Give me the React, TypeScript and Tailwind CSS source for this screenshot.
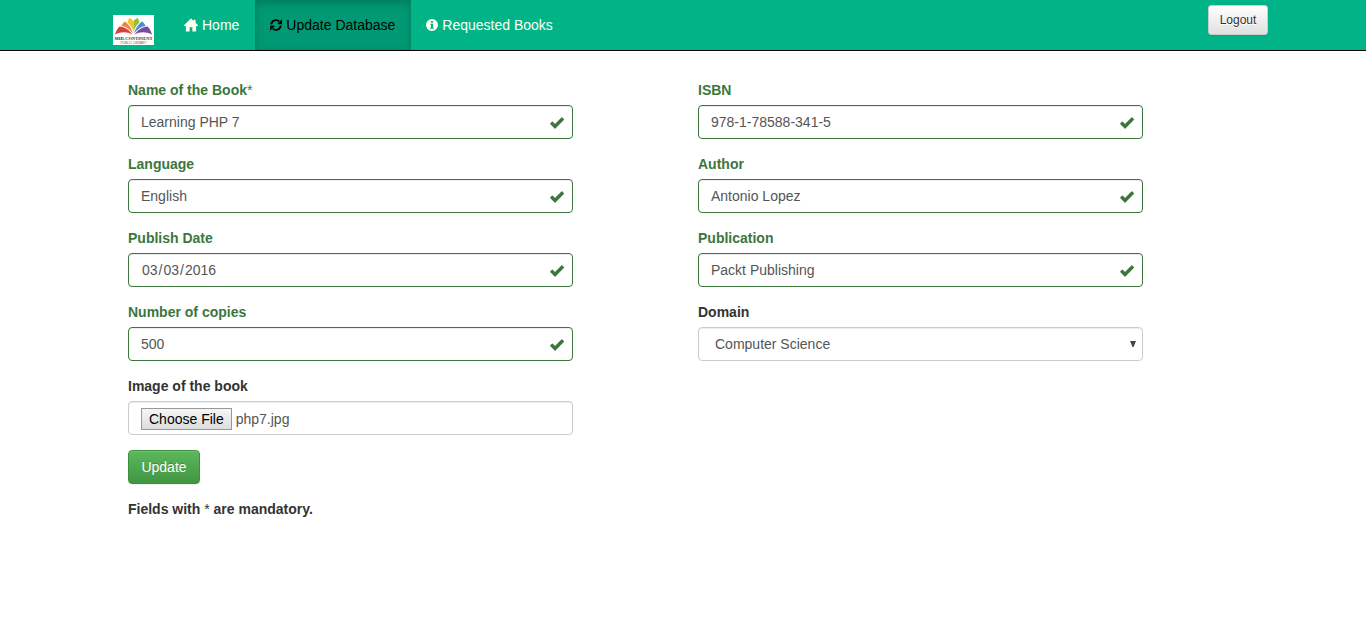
import { useEffect, useRef, type ReactNode } from "react";

const control =
  "block h-[34px] w-full rounded border bg-white text-sm leading-5 text-[#555] outline-none shadow-[inset_0_1px_1px_rgba(0,0,0,0.075)]";
const neutral = "border-[#ccc]";
const valid = "border-[#3c763d]";

function HomeIcon() {
  return (
    <svg viewBox="0 0 15 14" className="h-[14px] w-[14px] shrink-0" fill="#fffff0" aria-hidden="true">
      <path d="M7.1.2a.6.6 0 0 1 .8 0L10.400 2.600V1.400h2v3.200L15 7.200v.9h-2V14H9V9.500H6V14H2V8.100H0v-.9z" />
    </svg>
  );
}

function RefreshIcon() {
  return (
    <svg viewBox="0 0 12 12" className="h-3 w-3 shrink-0" aria-hidden="true">
      <path d="M1.200 5.300A4.900 4.900 0 0 1 9.300 2.400M10.800 6.700A4.900 4.900 0 0 1 2.700 9.600" fill="none" stroke="currentColor" strokeWidth="1.900" />
      <path d="M12 .2v5H7zM0 11.800v-5h5z" fill="currentColor" />
    </svg>
  );
}

function InfoIcon() {
  return (
    <svg viewBox="0 0 12 12" className="h-3 w-3 shrink-0" fill="#fffff0" aria-hidden="true">
      <path
        fillRule="evenodd"
        d="M6 0a6 6 0 1 1 0 12A6 6 0 0 1 6 0zM5 2v1.800h2V2zM4.200 4.800v1h.8v2.900h-.9v1h3.800v-1H7V4.800z"
      />
    </svg>
  );
}

function CheckIcon() {
  return (
    <svg viewBox="0 0 14 12" className="h-3 w-[14px]" fill="#3c763d" aria-hidden="true">
      <path d="M11.400.5a.6.6 0 0 1 .9 0l1.500 1.500a.6.6 0 0 1 0 .9l-8.300 8.500a.6.6 0 0 1-.9 0L.4 7.200a.6.6 0 0 1 0-.9l1.500-1.500a.6.6 0 0 1 .9 0L5 6.900z" />
    </svg>
  );
}

function Logo() {
  return (
    <svg viewBox="0 0 41 30" className="h-[30px] w-[41px]" role="img" aria-label="Mid-Continent Public Library">
      <rect width="41" height="30" fill="#fff" />
      <path d="M2 19.500C3 16 4.500 13.500 6.500 11.500c5 .5 10 3.500 13 8C14 16.500 8 16.500 2 19.500z" fill="#d8403c" />
      <path d="M8.500 11C9 9 10.500 7.500 12 6.500c4 3 7 7.500 8 12C17 14.500 13 11.500 8.500 11z" fill="#f2853f" />
      <path d="M14.500 7.500C15 5.500 15.500 4 16.500 3c2 .8 3.400 2 4 3.500V17C19.500 13 17.500 10 14.500 7.500z" fill="#f6c524" />
      <path d="M26.500 7.500C26 5.500 25.500 4 24.500 3c-2 .8-3.400 2-4 3.500V17c1-4 3-7 6-9.500z" fill="#8fbf45" />
      <path d="M32.500 11C32 9 30.500 7.500 29 6.500c-4 3-7 7.500-8 12 3-4 7-7 11.500-7.500z" fill="#4b8ed0" />
      <path d="M39 19.500c-1-3.500-2.500-6-4.500-8-5 .5-10 3.500-13 8 5.500-3 11.500-3 17.500 0z" fill="#7a489f" />
      <text x="20.500" y="24.500" textAnchor="middle" fontFamily="Liberation Serif, serif" fontSize="4.500" fontWeight="700" fill="#333">
        MID-CONTINENT
      </text>
      <text x="20.500" y="28.500" textAnchor="middle" fontFamily="Liberation Sans, sans-serif" fontSize="3.200" fill="#666">
        PUBLIC LIBRARY
      </text>
    </svg>
  );
}

function NavLink({ active = false, icon, children }: { active?: boolean; icon: ReactNode; children: ReactNode }) {
  return (
    <a
      href="#"
      aria-current={active ? "page" : undefined}
      className={
        active
          ? "flex h-[50px] items-center gap-1 bg-[#009973] pr-4 pl-[15px] text-black shadow-[inset_0_3px_9px_rgba(0,0,0,0.2)]"
          : "flex h-[50px] items-center gap-1 pr-4 pl-[15px] text-[#fffff0]"
      }
    >
      {icon}
      <span>{children}</span>
    </a>
  );
}

function Field({ id, label, ok = false, children }: { id: string; label: ReactNode; ok?: boolean; children: ReactNode }) {
  return (
    <div>
      <label htmlFor={id} className={ok ? "mb-[5px] block font-bold text-[#3c763d]" : "mb-[5px] block font-bold text-[#333]"}>
        {label}
      </label>
      <div className="relative">
        {children}
        {ok && (
          <span className="pointer-events-none absolute top-px right-0 flex h-[34px] w-[33px] items-center justify-center">
            <CheckIcon />
          </span>
        )}
      </div>
    </div>
  );
}

function TextField({ id, label, value, type = "text" }: { id: string; label: ReactNode; value: string; type?: string }) {
  return (
    <Field id={id} label={label} ok>
      <input
        id={id}
        type={type}
        defaultValue={value}
        className={`${control} ${valid} py-[6px] pr-[42px] pl-3 [&::-webkit-calendar-picker-indicator]:hidden`}
      />
    </Field>
  );
}

function CoverField() {
  const ref = useRef<HTMLInputElement>(null);
  useEffect(() => {
    if (!ref.current) return;
    const transfer = new DataTransfer();
    transfer.items.add(new File([""], "php7.jpg", { type: "image/jpeg" }));
    ref.current.files = transfer.files;
  }, []);
  return (
    <Field id="cover" label="Image of the book">
      <input
        ref={ref}
        id="cover"
        type="file"
        className={`${control} ${neutral} px-3 pt-[6px] file:mr-1 file:h-[22px] file:rounded-none file:border file:border-solid file:border-[#999] file:bg-linear-to-b file:from-[#f6f6f6] file:to-[#dddddd] file:px-[7px] file:py-0 file:text-sm file:text-black`}
      />
    </Field>
  );
}

export default function App() {
  return (
    <div className="font-['Liberation_Sans',Arial,sans-serif] text-sm leading-5 text-[#333]">
      <nav className="border-b border-black bg-[#00b488]">
        <div className="mx-auto flex max-w-[1170px] items-start pl-[15px]">
          <a href="#" className="mr-[15px] pt-[15px]">
            <Logo />
          </a>
          <NavLink icon={<HomeIcon />}>Home</NavLink>
          <NavLink active icon={<RefreshIcon />}>
            Update Database
          </NavLink>
          <NavLink icon={<InfoIcon />}>Requested Books</NavLink>
          <button
            type="button"
            className="mt-[5px] ml-auto h-[30px] w-[60px] rounded-[3px] border border-[#ccc] bg-linear-to-b from-white to-[#e0e0e0] text-xs text-[#333] shadow-[0_1px_1px_rgba(0,0,0,0.075)] [text-shadow:0_1px_0_#fff]"
          >
            Logout
          </button>
        </div>
      </nav>

      <main className="mx-auto max-w-[1170px] px-[15px] pt-[29px]">
        <form className="grid grid-cols-12" onSubmit={(e) => e.preventDefault()}>
          <div className="col-span-5 flex flex-col gap-[15px] px-[15px]">
            <TextField
              id="name"
              label={
                <>
                  Name of the Book<span className="font-normal">*</span>
                </>
              }
              value="Learning PHP 7"
            />
            <TextField id="language" label="Language" value="English" />
            <TextField id="date" label="Publish Date" type="date" value="2016-03-03" />
            <TextField id="copies" label="Number of copies" value="500" />
            <CoverField />
            <button
              type="submit"
              className="h-[34px] w-[72px] self-start rounded border border-[#3e8f3e] bg-linear-to-b from-[#5cb85c] to-[#419641] text-white shadow-[inset_0_1px_0_rgba(255,255,255,0.15),0_1px_1px_rgba(0,0,0,0.075)] [text-shadow:0_-1px_0_rgba(0,0,0,0.2)]"
            >
              Update
            </button>
            <p className="font-bold">
              Fields with <span className="font-normal">*</span> are mandatory.
            </p>
          </div>

          <div className="col-span-5 col-start-7 flex flex-col gap-[15px] px-[15px]">
            <TextField id="isbn" label="ISBN" value="978-1-78588-341-5" />
            <TextField id="author" label="Author" value="Antonio Lopez" />
            <TextField id="publication" label="Publication" value="Packt Publishing" />
            <Field id="domain" label="Domain">
              <select id="domain" className={`${control} ${neutral} appearance-none pr-6 pl-4`}>
                <option>Computer Science</option>
              </select>
              <svg
                viewBox="0 0 6 6"
                className="pointer-events-none absolute top-[14px] right-[7px] h-[6px] w-[6px]"
                fill="#444"
                aria-hidden="true"
              >
                <path d="M0 0h6L3.500 6h-1z" />
              </svg>
            </Field>
          </div>
        </form>
      </main>
    </div>
  );
}
